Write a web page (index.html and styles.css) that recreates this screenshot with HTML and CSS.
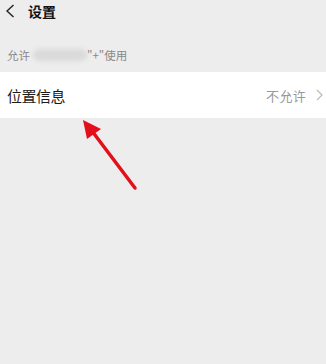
FILE: index.html
```html
<!DOCTYPE html>
<html lang="zh">
<head>
<meta charset="utf-8">
<link rel="stylesheet" href="styles.css">
</head>
<body>
<div class="page">
  <header class="nav">
    <svg class="back" width="10" height="14" viewBox="0 0 10 14"><path d="M8.5 1 L2 7 L8.5 13" fill="none" stroke="#222" stroke-width="1.4"/></svg>
    <span class="title">设置</span>
  </header>
  <div class="caption">允许<span class="blur"></span>"+"使用</div>
  <div class="row">
    <span class="label">位置信息</span>
    <span class="value">不允许
      <svg class="chev" width="7" height="12" viewBox="0 0 7 12"><path d="M1 1 L6 6 L1 11" fill="none" stroke="#bbb" stroke-width="1.2"/></svg>
    </span>
  </div>
  <svg class="arrow" width="326" height="364" viewBox="0 0 326 364">
    <line x1="135" y1="188" x2="92" y2="131" stroke="#e3101c" stroke-width="3.5" stroke-linecap="round"/>
    <polygon points="83,120 101,129 87,139" fill="#e3101c"/>
  </svg>
</div>
</body>
</html>
```
FILE: styles.css
```css
html, body {
  margin: 0;
  padding: 0;
  background: #ededed;
}
.page {
  position: relative;
  width: 326px;
  height: 364px;
  font-family: "Noto Sans CJK SC", "Noto Sans", sans-serif;
}
.nav {
  display: flex;
  align-items: center;
  height: 22px;
  padding-left: 5px;
}
.back {
  display: block;
}
.title {
  margin-left: 13px;
  font-size: 14px;
  font-weight: bold;
  color: #111;
  line-height: 22px;
}
.caption {
  margin-top: 22px;
  padding-left: 7px;
  height: 22px;
  font-size: 11.5px;
  line-height: 20px;
  color: #888;
  display: flex;
  align-items: center;
}
.blur {
  display: inline-block;
  width: 54px;
  height: 12px;
  margin-left: 3px;
  background: #dadada;
  border-radius: 6px;
  filter: blur(2px);
}
.row {
  margin-top: 6px;
  height: 46px;
  background: #fff;
  display: flex;
  align-items: center;
  justify-content: space-between;
  padding: 0 3px 0 7px;
}
.label {
  font-size: 15px;
  color: #1a1a1a;
  letter-spacing: -0.5px;
}
.value {
  display: flex;
  align-items: center;
  font-size: 13px;
  color: #999;
  letter-spacing: 0.3px;
}
.chev {
  margin-left: 10px;
  display: block;
}
.arrow {
  position: absolute;
  left: 0;
  top: 0;
  pointer-events: none;
}
```
